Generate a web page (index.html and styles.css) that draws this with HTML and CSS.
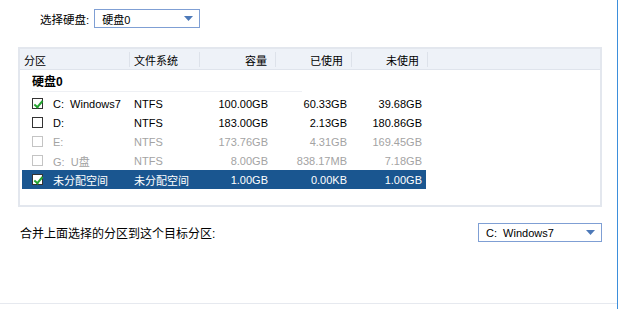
FILE: index.html
```html
<!DOCTYPE html>
<html lang="zh-CN">
  <head>
    <meta charset="UTF-8" />
    <title>合并分区</title>
    <link rel="stylesheet" href="styles.css">
  </head>
  <body>
    <div class="window">
      <div class="disk-row">
        <span class="field-label">选择硬盘:</span>
        <div class="combo combo-disk">
          <span>硬盘0</span>
          <svg class="arrow" width="9" height="5" viewBox="0 0 9 5"><path d="M0 0h9L4.5 5z" fill="#4d79b8"/></svg>
        </div>
      </div>

      <section class="table-box">
        <div class="thead">
          <div class="th c-name">分区</div>
          <div class="th c-fs">文件系统</div>
          <div class="th c-num">容量</div>
          <div class="th c-num">已使用</div>
          <div class="th c-num">未使用</div>
        </div>
        <div class="group-row">硬盘0</div>

        <div class="row">
          <div class="td c-name"><span class="check on"></span>C:&nbsp; Windows7</div>
          <div class="td c-fs">NTFS</div>
          <div class="td c-num">100.00GB</div>
          <div class="td c-num">60.33GB</div>
          <div class="td c-num">39.68GB</div>
        </div>
        <div class="row">
          <div class="td c-name"><span class="check"></span>D:</div>
          <div class="td c-fs">NTFS</div>
          <div class="td c-num">183.00GB</div>
          <div class="td c-num">2.13GB</div>
          <div class="td c-num">180.86GB</div>
        </div>
        <div class="row disabled">
          <div class="td c-name"><span class="check"></span>E:</div>
          <div class="td c-fs">NTFS</div>
          <div class="td c-num">173.76GB</div>
          <div class="td c-num">4.31GB</div>
          <div class="td c-num">169.45GB</div>
        </div>
        <div class="row disabled">
          <div class="td c-name"><span class="check"></span>G:&nbsp; U盘</div>
          <div class="td c-fs">NTFS</div>
          <div class="td c-num">8.00GB</div>
          <div class="td c-num">838.17MB</div>
          <div class="td c-num">7.18GB</div>
        </div>
        <div class="row selected">
          <div class="td c-name"><span class="check on"></span>未分配空间</div>
          <div class="td c-fs">未分配空间</div>
          <div class="td c-num">1.00GB</div>
          <div class="td c-num">0.00KB</div>
          <div class="td c-num">1.00GB</div>
        </div>
      </section>

      <div class="merge-row">
        <span class="field-label">合并上面选择的分区到这个目标分区:</span>
        <div class="combo combo-target">
          <span>C:&nbsp; Windows7</span>
          <svg class="arrow" width="9" height="5" viewBox="0 0 9 5"><path d="M0 0h9L4.5 5z" fill="#4d79b8"/></svg>
        </div>
      </div>

      <div class="footer"></div>
    </div>
  </body>
</html>
```

FILE: styles.css
```css
:root {
  --line: #e3e7ee;
  --head-bg: #eef2f8;
  --sel-bg: #1a5690;
  --combo-border: #7f9fd4;
  --gray-text: #a3a3a3;
}
* { box-sizing: border-box; margin: 0; padding: 0; }
html, body { height: 100%; background: #fff; color: #000; font-family: "Liberation Sans", "Noto Sans CJK SC", sans-serif; font-size: 11px; }
body { overflow: hidden; }

.window { width: 618px; height: 309px; border-right: 1px solid #3d8fdc; display: flex; flex-direction: column; }

.field-label { font-size: 12px; }
.combo { display: flex; align-items: center; justify-content: space-between; height: 19px; border: 1px solid var(--combo-border); padding: 0 6px 0 7px; font-size: 11px; background: #fff; }
.combo .arrow { display: block; }

.disk-row { display: flex; align-items: center; gap: 5px; padding: 9px 0 0 40px; }
.disk-row .field-label { font-size: 11.5px; }
.combo-disk { width: 106px; }

.table-box { margin: 19px 0 0 18px; width: 584px; height: 160px; border: 2px solid var(--line); }
.thead { display: flex; height: 21px; background: var(--head-bg); border-bottom: 1px solid #dfe4ec; }
.th { display: flex; align-items: center; padding: 0 8px 0 4px; font-size: 11px; border-right: 1px solid #dde2ea; height: 15px; margin-top: 3px; }

.c-name { width: 110px; }
.c-fs { width: 70px; }
.c-num { width: 76px; justify-content: flex-end; }

.group-row { height: 22px; margin: 0 0 2px 12px; display: flex; align-items: center; font-weight: bold; font-size: 12px; border-bottom: 1px solid #eef0f4; width: 270px; }

.row { display: flex; height: 19px; margin-left: 2px; width: 404px; }
.td { display: flex; align-items: center; height: 100%; padding: 0 6px 0 4px; }
.row .c-name { padding-left: 10px; width: 110px; }
.row .c-fs { padding-left: 2px; width: 70px; }
.row .c-num:nth-child(3) { width: 74px; padding-right: 8px; }
.row .c-num:nth-child(4) { width: 76px; padding-right: 5px; }
.row .c-num:nth-child(5) { width: 74px; padding-right: 4px; }
.row.disabled { color: var(--gray-text); }
.row.selected { background: var(--sel-bg); color: #fff; }

.check { width: 11px; height: 11px; border: 1px solid #333; background: #fff; margin-right: 10px; position: relative; flex: none; }
.row.disabled .check { border-color: #c4c4c4; }
.check.on::after { content: ""; position: absolute; left: 3px; top: 0; width: 3px; height: 7px; border: solid #24a330; border-width: 0 2px 2px 0; transform: rotate(40deg); }

.merge-row { display: flex; align-items: center; justify-content: space-between; margin: 16px 0 0 20px; width: 582px; }
.combo-target { width: 124px; }

.footer { margin-top: auto; height: 6px; border-top: 1px solid #e6e9ef; }
```
